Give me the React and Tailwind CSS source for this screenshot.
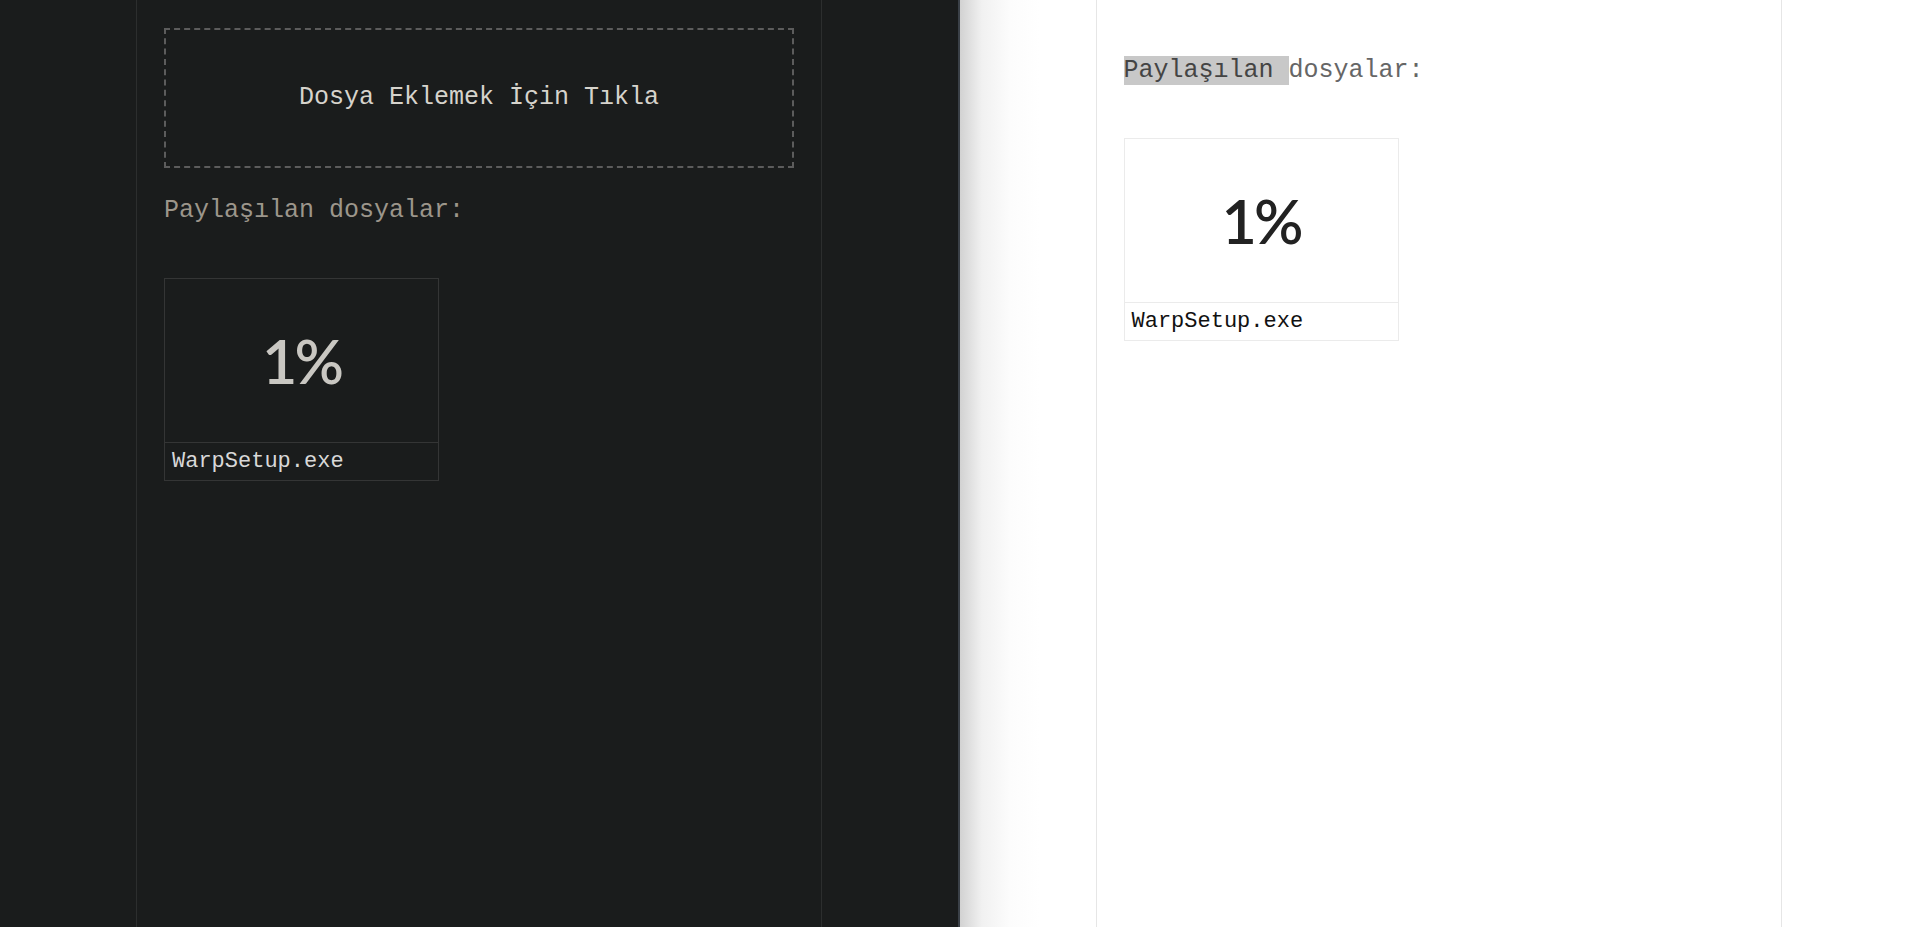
import React from 'react';

const mono = { fontFamily: '"Liberation Mono", "Courier New", monospace' };

const FileCard = ({ name, progress, dark }) => (
  <div
    className={`w-[275px] h-[203px] flex flex-col border ${
      dark ? 'border-[#343535]' : 'border-[#ebebeb]'
    }`}
  >
    <div
      className={`h-[163px] flex items-center justify-center text-[61px] font-semibold tracking-[-3px] ${
        dark ? 'text-[#c9c7c2]' : 'text-[#222222]'
      }`}
      style={{ fontFamily: 'Lato, "DejaVu Sans", sans-serif' }}
    >
      {progress}%
    </div>
    <div
      className={`flex-1 flex items-center px-[7px] border-t text-[22px] ${
        dark ? 'border-[#343535] text-[#d8d8d8]' : 'border-[#ebebeb] text-[#111111]'
      }`}
      style={mono}
    >
      {name}
    </div>
  </div>
);

const Pane = ({ dark }) => (
  <div
    className={`flex-1 flex justify-center ${
      dark ? 'bg-[#1a1c1c]' : 'bg-[linear-gradient(to_right,#d2d2d2,#f1f1f1_22px,#fcfcfc_50px,#ffffff_80px)]'
    }`}
  >
    <div
      className={`w-[686px] h-full border-x px-[27px] pt-[28px] ${
        dark ? 'border-[#2c2e2e] bg-[#1a1c1c]' : 'border-[#e6e6e6] bg-white'
      }`}
    >
      {dark && (
        <div
          className="h-[140px] flex items-center justify-center border-2 border-dashed border-[#5c5c5c] text-[25px] text-[#d6d3cc] cursor-pointer"
          style={mono}
        >
          Dosya Eklemek İçin Tıkla
        </div>
      )}
      <p
        className={`mt-[28px] text-[25px] leading-[30px] ${dark ? 'text-[#9c968b]' : 'text-[#666666]'}`}
        style={mono}
      >
        {dark ? (
          'Paylaşılan dosyalar:'
        ) : (
          <>
            <span className="bg-[#c8c8c8] text-[#444444]">Paylaşılan </span>dosyalar:
          </>
        )}
      </p>
      <div className="mt-[52px]">
        <FileCard name="WarpSetup.exe" progress={1} dark={dark} />
      </div>
    </div>
  </div>
);

export default function App() {
  return (
    <div className="w-full h-screen flex overflow-hidden">
      <div className="w-[958px] flex">
        <Pane dark />
      </div>
      <div className="w-[2px] bg-[#3a4047]" />
      <Pane dark={false} />
    </div>
  );
}
